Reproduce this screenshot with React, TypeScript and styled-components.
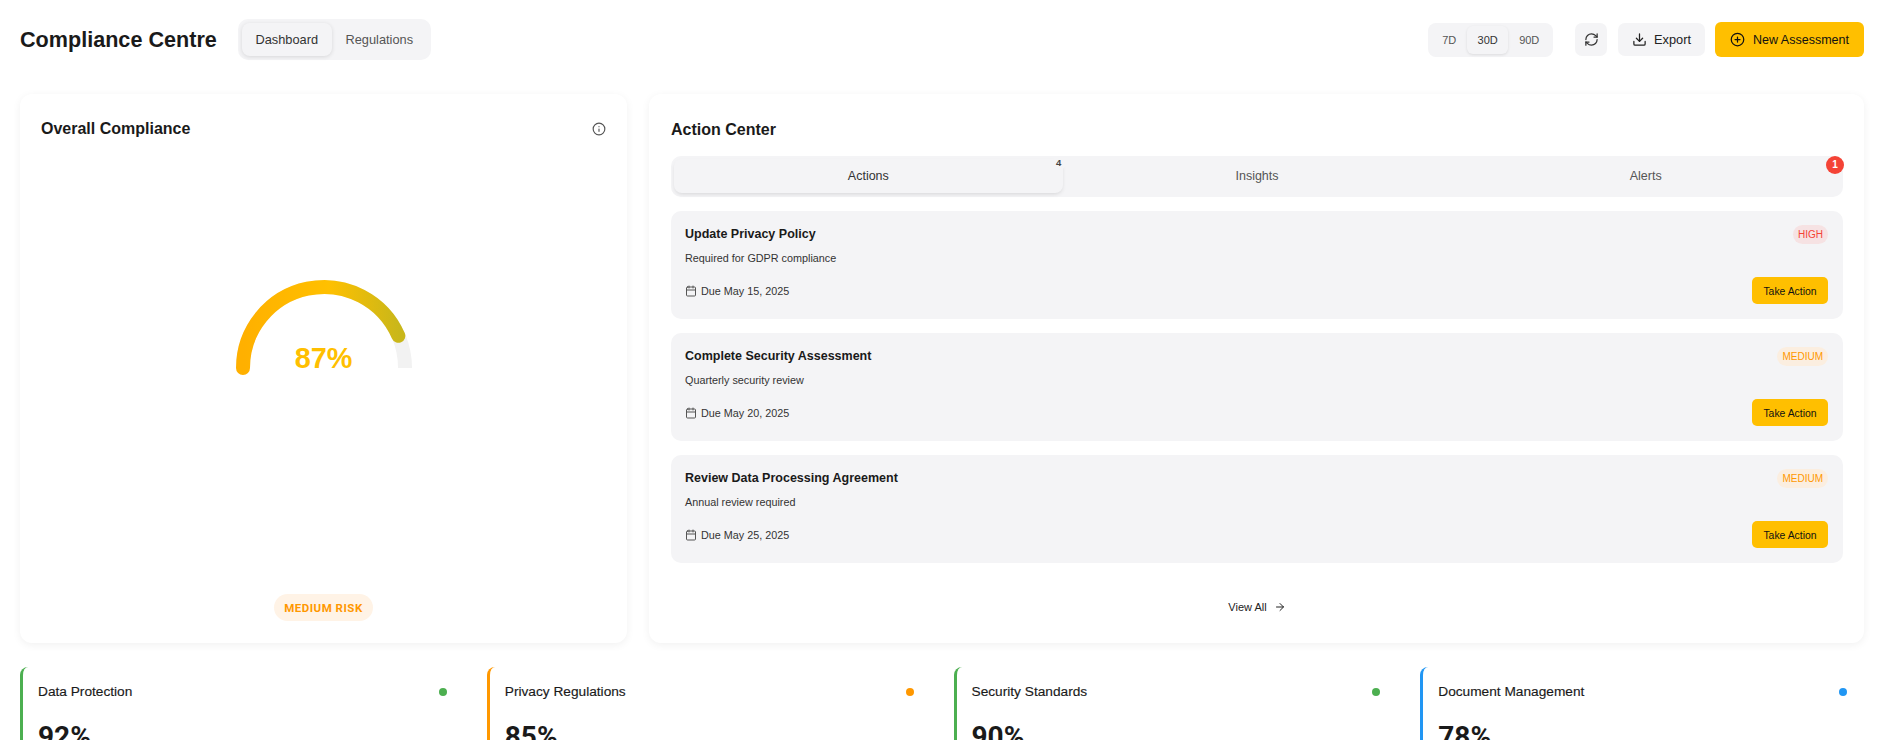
import React from "react";
import styled, { createGlobalStyle } from "styled-components";
import { ArrowRight, Calendar, CirclePlus, Download, Info, RefreshCw } from "lucide-react";

const Global = createGlobalStyle`
  html, body {
    margin: 0;
    padding: 0;
    background: #fff;
    overflow: hidden;
  }
  body {
    font-family: "Liberation Sans", Arial, sans-serif;
    color: #1a1a1a;
  }
  * {
    box-sizing: border-box;
  }
`;

const Page = styled.div`
  padding: 19px 16px 0 20px;
`;

const Header = styled.header`
  display: flex;
  align-items: center;
  justify-content: space-between;
  height: 41px;
  margin-bottom: 34px;
`;

const HeaderGroup = styled.div`
  display: flex;
  align-items: center;
`;

const PageTitle = styled.h1`
  margin: 0 21px 0 0;
  font-size: 21.6px;
  font-weight: 700;
  color: #1a1a1a;
`;

const NavTabs = styled.div`
  display: flex;
  padding: 4px;
  background: #f4f4f6;
  border-radius: 10px;
`;

const NavTab = styled.div<{ $active?: boolean }>`
  display: flex;
  align-items: center;
  justify-content: center;
  height: 33px;
  width: ${(p) => (p.$active ? "90px" : "95px")};
  font-size: 12.8px;
  color: ${(p) => (p.$active ? "#333" : "#555")};
  border-radius: 8px;
  box-shadow: ${(p) => (p.$active ? "0 1px 4px rgba(0,0,0,.12)" : "none")};
`;

const RangeTabs = styled.div`
  display: flex;
  padding: 3px;
  height: 34px;
  margin-right: 22px;
  background: #f4f4f6;
  border-radius: 8px;
`;

const RangeTab = styled.div<{ $active?: boolean }>`
  display: flex;
  align-items: center;
  justify-content: center;
  padding: 0 10.7px;
  font-size: 11px;
  color: ${(p) => (p.$active ? "#333" : "#555")};
  border-radius: 6px;
  box-shadow: ${(p) => (p.$active ? "0 1px 3px rgba(0,0,0,.1)" : "none")};
`;

const IconButton = styled.div`
  display: flex;
  align-items: center;
  justify-content: center;
  width: 32px;
  height: 33px;
  margin-right: 11px;
  background: #f4f4f6;
  color: #333;
  border-radius: 7px;
`;

const ExportButton = styled.div`
  display: flex;
  align-items: center;
  justify-content: center;
  gap: 7px;
  width: 87px;
  height: 33px;
  margin-right: 10px;
  font-size: 12.8px;
  background: #f4f4f6;
  color: #222;
  border-radius: 7px;
`;

const PrimaryButton = styled.div`
  display: flex;
  align-items: center;
  justify-content: center;
  gap: 8px;
  width: 149px;
  height: 35px;
  font-size: 12.5px;
  background: #ffbf00;
  color: #111;
  border-radius: 6px;
`;

const MainGrid = styled.div`
  display: grid;
  grid-template-columns: 607px 1fr;
  gap: 22px;
  margin-bottom: 24px;
`;

const Card = styled.section`
  display: flex;
  flex-direction: column;
  height: 549px;
  background: #fff;
  border-radius: 12px;
  box-shadow: 0 2px 8px rgba(0, 0, 0, 0.06);
`;

const GaugeCard = styled(Card)`
  padding: 25px 21px 22px;
`;

const ActionCard = styled(Card)`
  padding: 26px 21px 0 22px;
`;

const CardHeader = styled.div`
  display: flex;
  align-items: center;
  justify-content: space-between;
  height: 20px;
`;

const CardTitle = styled.h2`
  margin: 0;
  font-size: 16px;
  font-weight: 700;
  color: #1a1a1a;
`;

const GaugeArea = styled.div`
  flex: 1;
  display: flex;
  align-items: center;
  justify-content: center;
  padding-top: 2px;
`;

const GaugeBox = styled.div`
  position: relative;
  width: 190px;
  height: 190px;
`;

const GaugeValue = styled.div`
  position: absolute;
  top: 69px;
  left: 0;
  right: 0;
  text-align: center;
  font-size: 28.8px;
  font-weight: 700;
  line-height: 32px;
  color: #ffbf00;
`;

const RiskPill = styled.div`
  align-self: center;
  display: flex;
  align-items: center;
  height: 27px;
  padding: 0 10px;
  font-family: Roboto, sans-serif;
  font-size: 11.5px;
  font-weight: 700;
  letter-spacing: 0.5px;
  color: #ff9800;
  background: #fff3e6;
  border-radius: 14px;
`;

const ActionTabs = styled.div`
  display: flex;
  height: 41px;
  margin-top: 16px;
  padding: 3px;
  background: #f4f4f6;
  border-radius: 10px;
`;

const ActionTab = styled.div<{ $active?: boolean }>`
  position: relative;
  flex: 1;
  display: flex;
  align-items: center;
  justify-content: center;
  height: 34px;
  font-size: 12.5px;
  color: ${(p) => (p.$active ? "#333" : "#555")};
  border-radius: 8px;
  box-shadow: ${(p) => (p.$active ? "0 2px 4px -1px rgba(0,0,0,.13)" : "none")};
`;

const CountBadge = styled.span`
  position: absolute;
  top: -3px;
  right: -3px;
  width: 14px;
  height: 14px;
  font-size: 9.5px;
  font-weight: 700;
  line-height: 14px;
  text-align: center;
  color: #444;
  background: #f4f4f6;
  border-radius: 50%;
`;

const AlertBadge = styled.span`
  position: absolute;
  top: -3px;
  right: -4px;
  width: 18px;
  height: 18px;
  font-size: 10px;
  font-weight: 700;
  line-height: 18px;
  text-align: center;
  color: #fff;
  background: #f44336;
  border-radius: 50%;
`;

const ActionList = styled.div`
  display: flex;
  flex-direction: column;
  gap: 14px;
  margin-top: 14px;
`;

const ActionItem = styled.article`
  display: flex;
  flex-direction: column;
  height: 108px;
  padding: 14px 15px 15px 14px;
  background: #f4f4f6;
  border-radius: 10px;
`;

const ItemTop = styled.div`
  display: flex;
  justify-content: space-between;
  align-items: flex-start;
`;

const ItemTitle = styled.div`
  padding-top: 1px;
  font-size: 12.5px;
  font-weight: 700;
  line-height: 16px;
  color: #1a1a1a;
`;

const ItemDesc = styled.div`
  margin-top: 9px;
  font-size: 10.8px;
  line-height: 14px;
  color: #333;
`;

const Priority = styled.span<{ $high?: boolean }>`
  display: block;
  height: 19px;
  padding: 0 5px;
  font-size: 10px;
  line-height: 19px;
  color: ${(p) => (p.$high ? "#f44336" : "#ff9800")};
  background: ${(p) => (p.$high ? "#f6e2e3" : "#fbeee0")};
  border-radius: 10px;
`;

const ItemBottom = styled.div`
  display: flex;
  justify-content: space-between;
  align-items: center;
  margin-top: auto;
`;

const DueDate = styled.div`
  display: flex;
  align-items: center;
  gap: 4px;
  font-size: 10.8px;
  color: #333;
  svg {
    color: #555;
  }
`;

const TakeAction = styled.div`
  display: flex;
  align-items: center;
  justify-content: center;
  width: 76px;
  height: 27px;
  padding-top: 1px;
  font-size: 10.4px;
  color: #111;
  background: #ffbf00;
  border-radius: 5px;
`;

const ViewAll = styled.div`
  display: flex;
  align-items: center;
  justify-content: center;
  gap: 7px;
  margin-top: 37px;
  font-size: 11px;
  line-height: 14px;
  color: #222;
`;

const MetricGrid = styled.div`
  display: grid;
  grid-template-columns: repeat(4, 1fr);
  gap: 24px;
  margin-right: 1px;
`;

const Metric = styled.article<{ $color: string }>`
  height: 120px;
  padding: 16px 16px 16px 15px;
  background: #fff;
  border-left: 3px solid ${(p) => p.$color};
  border-radius: 8px;
`;

const MetricTop = styled.div`
  display: flex;
  align-items: center;
  justify-content: space-between;
`;

const MetricName = styled.div`
  font-size: 13.7px;
  line-height: 18px;
  color: #1a1a1a;
  -webkit-text-stroke: 0.15px #1a1a1a;
`;

const Dot = styled.span<{ $color: string }>`
  width: 8px;
  height: 8px;
  background: ${(p) => p.$color};
  border-radius: 50%;
`;

const MetricValue = styled.div`
  margin-top: 20px;
  font-family: Roboto, sans-serif;
  font-size: 28px;
  font-weight: 700;
  line-height: 32px;
  color: #1a1a1a;
`;

const actions = [
  { title: "Update Privacy Policy", desc: "Required for GDPR compliance", due: "Due May 15, 2025", level: "HIGH" },
  { title: "Complete Security Assessment", desc: "Quarterly security review", due: "Due May 20, 2025", level: "MEDIUM" },
  { title: "Review Data Processing Agreement", desc: "Annual review required", due: "Due May 25, 2025", level: "MEDIUM" },
];

const metrics = [
  { name: "Data Protection", value: "92%", color: "#4caf50" },
  { name: "Privacy Regulations", value: "85%", color: "#ff9800" },
  { name: "Security Standards", value: "90%", color: "#4caf50" },
  { name: "Document Management", value: "78%", color: "#2196f3" },
];

function Gauge() {
  const r = 81;
  const cx = 95;
  const cy = 95;
  const angle = Math.PI * (1 - 0.87);
  const ex = cx + r * Math.cos(angle);
  const ey = cy - r * Math.sin(angle);
  return (
    <svg width="190" height="190" viewBox="0 0 190 190" fill="none">
      <defs>
        <linearGradient id="gaugeFill" gradientUnits="userSpaceOnUse" x1="14" y1="0" x2="170" y2="0">
          <stop offset="0" stopColor="#ffb000" />
          <stop offset="0.55" stopColor="#ffc000" />
          <stop offset="1" stopColor="#c9b71a" />
        </linearGradient>
      </defs>
      <path d={`M${cx - r} ${cy}A${r} ${r} 0 0 1 ${cx + r} ${cy}`} stroke="#f2f2f2" strokeWidth="14" />
      <path
        d={`M${cx - r} ${cy}A${r} ${r} 0 0 1 ${ex} ${ey}`}
        stroke="url(#gaugeFill)"
        strokeWidth="14"
        strokeLinecap="round"
      />
    </svg>
  );
}

export default function App() {
  return (
    <Page>
      <Global />
      <Header>
        <HeaderGroup>
          <PageTitle>Compliance Centre</PageTitle>
          <NavTabs>
            <NavTab $active>Dashboard</NavTab>
            <NavTab>Regulations</NavTab>
          </NavTabs>
        </HeaderGroup>
        <HeaderGroup>
          <RangeTabs>
            <RangeTab>7D</RangeTab>
            <RangeTab $active>30D</RangeTab>
            <RangeTab>90D</RangeTab>
          </RangeTabs>
          <IconButton>
            <RefreshCw size={15} />
          </IconButton>
          <ExportButton>
            <Download size={15} />
            Export
          </ExportButton>
          <PrimaryButton>
            <CirclePlus size={15} />
            New Assessment
          </PrimaryButton>
        </HeaderGroup>
      </Header>

      <MainGrid>
        <GaugeCard>
          <CardHeader>
            <CardTitle>Overall Compliance</CardTitle>
            <Info size={14} color="#555" />
          </CardHeader>
          <GaugeArea>
            <GaugeBox>
              <Gauge />
              <GaugeValue>87%</GaugeValue>
            </GaugeBox>
          </GaugeArea>
          <RiskPill>MEDIUM RISK</RiskPill>
        </GaugeCard>

        <ActionCard>
          <CardHeader>
            <CardTitle>Action Center</CardTitle>
          </CardHeader>
          <ActionTabs>
            <ActionTab $active>
              Actions
              <CountBadge>4</CountBadge>
            </ActionTab>
            <ActionTab>Insights</ActionTab>
            <ActionTab>
              Alerts
              <AlertBadge>1</AlertBadge>
            </ActionTab>
          </ActionTabs>
          <ActionList>
            {actions.map((a) => (
              <ActionItem key={a.title}>
                <ItemTop>
                  <div>
                    <ItemTitle>{a.title}</ItemTitle>
                    <ItemDesc>{a.desc}</ItemDesc>
                  </div>
                  <Priority $high={a.level === "HIGH"}>{a.level}</Priority>
                </ItemTop>
                <ItemBottom>
                  <DueDate>
                    <Calendar size={12} />
                    {a.due}
                  </DueDate>
                  <TakeAction>Take Action</TakeAction>
                </ItemBottom>
              </ActionItem>
            ))}
          </ActionList>
          <ViewAll>
            View All
            <ArrowRight size={12} />
          </ViewAll>
        </ActionCard>
      </MainGrid>

      <MetricGrid>
        {metrics.map((m) => (
          <Metric key={m.name} $color={m.color}>
            <MetricTop>
              <MetricName>{m.name}</MetricName>
              <Dot $color={m.color} />
            </MetricTop>
            <MetricValue>{m.value}</MetricValue>
          </Metric>
        ))}
      </MetricGrid>
    </Page>
  );
}
